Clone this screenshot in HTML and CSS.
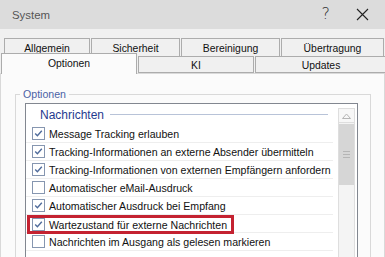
FILE: index.html
```html
<!DOCTYPE html>
<html lang="de">
<head>
    <title>System</title>
    <link rel="stylesheet" href="styles.css">
</head>
<body>
    <div class="window">
        <div class="titlebar">
            <span class="title">System</span>
            <span class="help">?</span>
            <svg class="close" width="13" height="13" viewBox="0 0 13 13">
                <path d="M1 1 L12 12 M12 1 L1 12" stroke="#222" stroke-width="1.1" fill="none"/>
            </svg>
        </div>

        <div class="tabs">
            <div class="tab-row row-top">
                <div class="tab">Allgemein</div>
                <div class="tab">Sicherheit</div>
                <div class="tab">Bereinigung</div>
                <div class="tab">Übertragung</div>
            </div>
            <div class="tab-row row-bottom">
                <div class="tab active">Optionen</div>
                <div class="tab">KI</div>
                <div class="tab">Updates</div>
            </div>
        </div>

        <div class="panel">
            <fieldset class="group">
                <legend>Optionen</legend>
                <div class="listbox">
                    <div class="list-content">
                        <div class="section">
                            <span class="section-title">Nachrichten</span>
                            <span class="section-line"></span>
                        </div>
                        <div class="row"><span class="check on"></span>Message Tracking erlauben</div>
                        <div class="row"><span class="check on"></span>Tracking-Informationen an externe Absender übermitteln</div>
                        <div class="row"><span class="check on"></span>Tracking-Informationen von externen Empfängern anfordern</div>
                        <div class="row"><span class="check"></span>Automatischer eMail-Ausdruck</div>
                        <div class="row"><span class="check on"></span>Automatischer Ausdruck bei Empfang</div>
                        <div class="row row-hl"><span class="hl"><span class="check on"></span>Wartezustand für externe Nachrichten</span></div>
                        <div class="row"><span class="check"></span>Nachrichten im Ausgang als gelesen markieren</div>
                    </div>
                    <div class="scrollbar">
                        <div class="sb-up">
                            <svg width="9" height="6" viewBox="0 0 9 6">
                                <path d="M0.5 5.5 L4.5 1 L8.5 5.5 Z" fill="none" stroke="#b5b5b5" stroke-width="1"/>
                            </svg>
                        </div>
                        <div class="sb-thumb">
                            <span class="grip"></span>
                        </div>
                    </div>
                </div>
            </fieldset>
        </div>
    </div>
</body>
</html>
```

FILE: styles.css
```css
body {
    margin: 0;
    font-family: "Liberation Sans", Arial, sans-serif;
    font-size: 10.6px;
    color: #111;
}
.window {
    width: 385px;
    height: 257px;
    overflow: hidden;
    background-color: #f0f0f0;
    display: flex;
    flex-direction: column;
}
.titlebar {
    height: 29px;
    flex: none;
    background-color: #dcdcdc;
    display: flex;
    align-items: center;
    padding-left: 12px;
}
.title {
    color: #555;
    flex: 1;
    font-size: 11.4px;
}
.help {
    font-family: "DejaVu Sans", sans-serif;
    font-size: 16px;
    font-weight: 200;
    color: #333;
    margin-right: 26px;
    margin-top: -2px;
}
.close {
    margin-right: 16px;
}
.tabs {
    margin-top: 9px;
    flex: none;
    font-size: 10.4px;
}
.tab-row {
    display: grid;
    column-gap: 1px;
}
.row-top {
    grid-template-columns: 86px 89px 99px 103px;
    padding-left: 4px;
    height: 18px;
}
.row-bottom {
    grid-template-columns: 136px 116px 132px;
    padding-left: 1px;
    height: 17px;
}
.tab {
    border: 1px solid #acacac;
    background-color: #f0f0f0;
    display: flex;
    align-items: center;
    justify-content: center;
    padding-top: 1px;
}
.row-top .tab {
    border-bottom: none;
}
.tab.active {
    background-color: #fbfbfb;
    border-bottom: none;
    margin-top: -3px;
    margin-bottom: -1px;
    position: relative;
    z-index: 1;
    padding-bottom: 2px;
}
.panel {
    flex: 1;
    background-color: #fbfbfb;
    border: 1px solid #d9d9d9;
    padding: 13px 13px 0 14px;
}
.group {
    margin: 0;
    min-width: 0;
    border: 1px solid #d9d9d9;
    padding: 1px 12px 0 9px;
    height: 200px;
}
.group legend {
    color: #4b62a6;
    padding: 0 3px;
    margin-left: -5px;
    line-height: 15px;
}
.listbox {
    border: 1px solid #828790;
    background-color: #fff;
    display: flex;
    height: 180px;
}
.list-content {
    flex: 1;
    min-width: 0;
}
.section {
    display: flex;
    align-items: center;
    height: 21px;
    padding: 0 10px 0 14px;
}
.section-title {
    color: #1f3a8f;
    font-size: 12px;
    margin-top: 1px;
}
.section-line {
    flex: 1;
    height: 1px;
    background-color: #b8c3d8;
    margin-left: 6px;
}
.row {
    display: flex;
    align-items: center;
    height: 17px;
    border-bottom: 1px solid #eeeeee;
    margin-right: 5px;
    padding-left: 6px;
    white-space: nowrap;
}
.check {
    width: 11px;
    height: 11px;
    border: 1px solid #8696b0;
    background-color: #fff;
    margin-right: 4px;
    flex: none;
}
.check.on {
    background-image: url("data:image/svg+xml;utf8,<svg xmlns='http://www.w3.org/2000/svg' width='11' height='11' viewBox='0 0 11 11'><path d='M2.2 5.6 L4.4 7.8 L8.8 2.8' fill='none' stroke='%234f6b9b' stroke-width='1.4'/></svg>");
}
.row-hl {
    padding-left: 1px;
}
.hl {
    display: inline-flex;
    align-items: center;
    height: 19px;
    box-sizing: border-box;
    border: 3px solid #c42231;
    padding: 0 4px 0 2px;
    align-self: flex-start;
}
.scrollbar {
    width: 15px;
    flex: none;
    margin: 4px 2px 0 0;
    border-left: 1px solid #dedede;
    border-right: 1px solid #dedede;
    background-color: #f4f4f4;
}
.sb-up {
    height: 13px;
    border-top: 1px solid #dedede;
    border-bottom: 1px solid #dedede;
    background-color: #f7f7f7;
    display: flex;
    align-items: center;
    justify-content: center;
}
.sb-thumb {
    margin-top: 1px;
    height: 61px;
    background-color: #d6d6d6;
    display: flex;
    align-items: center;
    justify-content: center;
}
.grip {
    width: 7px;
    height: 5px;
    border-top: 1px solid #b5b5b5;
    border-bottom: 1px solid #b5b5b5;
    background: linear-gradient(#b5b5b5, #b5b5b5) center / 100% 1px no-repeat;
}
```
